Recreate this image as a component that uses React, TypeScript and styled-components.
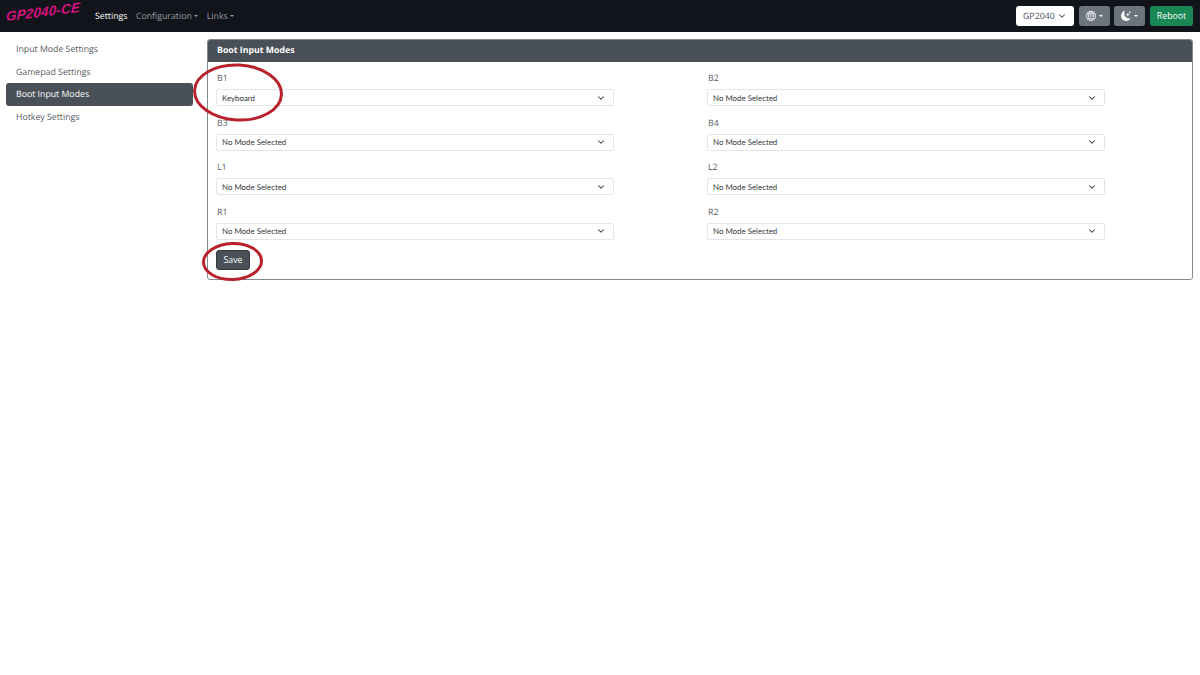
import { ChevronDown } from "lucide-react";
import { BsGlobe, BsMoonStarsFill } from "react-icons/bs";
import styled, { createGlobalStyle } from "styled-components";

const GlobalStyle = createGlobalStyle`
  html, body {
    margin: 0;
    background: #fff;
  }
  body {
    font-family: "Open Sans", "Noto Sans", sans-serif;
    font-size: 8.75px;
    color: #212529;
    text-rendering: geometricPrecision;
  }
`;

const Page = styled.div`
  position: relative;
  width: 1200px;
  height: 675px;
  overflow: hidden;
`;

const Navbar = styled.nav`
  height: 32px;
  background: #12141c;
  display: flex;
  align-items: center;
  padding: 0 7px 0 6px;
`;

const Logo = styled.span`
  width: 89px;
  flex: none;
  font-family: "Liberation Sans", sans-serif;
  font-size: 13.5px;
  font-style: italic;
  font-weight: 700;
  letter-spacing: 0.2px;
  color: #d6127f;
  transform: rotate(-7deg) skewX(-10deg);
  transform-origin: left center;
  white-space: nowrap;
`;

const NavLink = styled.a<{ $active?: boolean }>`
  color: ${(p) => (p.$active ? "#fff" : "#9a9da1")};
  margin-right: 8.5px;
  white-space: nowrap;
  &.dropdown::after {
    content: "";
    display: inline-block;
    margin-left: 2.5px;
    vertical-align: 2px;
    border-top: 2.5px solid;
    border-left: 2.5px solid transparent;
    border-right: 2.5px solid transparent;
  }
`;

const NavRight = styled.div`
  margin-left: auto;
  display: flex;
  align-items: center;
  gap: 4px;
`;

const BoardSelect = styled.div`
  width: 58px;
  height: 20px;
  box-sizing: border-box;
  margin-right: 1px;
  background: #fff;
  border-radius: 3px;
  padding: 0 7px;
  display: flex;
  align-items: center;
  justify-content: space-between;
  color: #495057;
`;

const NavButton = styled.button<{ $green?: boolean }>`
  height: 20px;
  width: ${(p) => (p.$green ? "43px" : "31px")};
  margin-left: ${(p) => (p.$green ? "1px" : "0")};
  padding: 0;
  border: 0;
  border-radius: 3px;
  background: ${(p) => (p.$green ? "#198754" : "#6c757d")};
  color: #fff;
  font: inherit;
  display: flex;
  align-items: center;
  justify-content: center;
  gap: 3px;
  &.dropdown::after {
    content: "";
    border-top: 2.5px solid;
    border-left: 2.5px solid transparent;
    border-right: 2.5px solid transparent;
  }
`;

const Main = styled.div`
  display: flex;
  padding: 7px 7px 0 6px;
  gap: 14px;
`;

const Sidebar = styled.aside`
  width: 187px;
  flex: none;
  display: flex;
  flex-direction: column;
  margin-top: -1px;
`;

const SideItem = styled.a<{ $active?: boolean }>`
  height: 22.6px;
  line-height: 22.6px;
  padding: 0 10px;
  border-radius: 3px;
  color: ${(p) => (p.$active ? "#fff" : "#555b61")};
  background: ${(p) => (p.$active ? "#495057" : "transparent")};
`;

const Card = styled.section`
  flex: 1;
  height: 241px;
  box-sizing: border-box;
  border: 1px solid #85888c;
  border-radius: 3px;
  overflow: hidden;
`;

const CardHeader = styled.h2`
  margin: -1px -1px 0;
  height: 23px;
  line-height: 23px;
  padding: 0 10px;
  background: #495057;
  color: #fff;
  font-size: 8.75px;
  font-weight: 700;
`;

const CardBody = styled.div`
  padding: 9px 8px 0;
`;

const FieldGrid = styled.div`
  display: grid;
  grid-template-columns: 491px 1fr;
  row-gap: 9.5px;
`;

const Field = styled.label`
  display: block;
`;

const FieldLabel = styled.div`
  height: 18px;
  line-height: 15px;
  padding-left: 1px;
  color: #555b61;
`;

const SelectBox = styled.div`
  width: 398px;
  height: 17px;
  box-sizing: border-box;
  border: 1px solid #e3e5e8;
  border-radius: 2px;
  padding: 0 7px 0 5px;
  display: flex;
  align-items: center;
  justify-content: space-between;
  font-family: "Lato", "Open Sans", sans-serif;
  font-size: 7.9px;
  color: #343a40;
`;

const SaveButton = styled.button`
  display: block;
  margin-top: 10.5px;
  width: 34px;
  height: 20px;
  padding: 0;
  border: 1px solid #343a40;
  border-radius: 3px;
  background: #495057;
  color: #fff;
  font: inherit;
`;

const Ring = styled.svg<{ $left: number; $top: number }>`
  position: absolute;
  left: ${(p) => p.$left}px;
  top: ${(p) => p.$top}px;
  overflow: visible;
  pointer-events: none;
`;

const modes = [
  { label: "B1", value: "Keyboard" },
  { label: "B2", value: "No Mode Selected" },
  { label: "B3", value: "No Mode Selected" },
  { label: "B4", value: "No Mode Selected" },
  { label: "L1", value: "No Mode Selected" },
  { label: "L2", value: "No Mode Selected" },
  { label: "R1", value: "No Mode Selected" },
  { label: "R2", value: "No Mode Selected" },
];

export default function App() {
  return (
    <Page>
      <GlobalStyle />
      <Navbar>
        <Logo>GP2040-CE</Logo>
        <NavLink $active>Settings</NavLink>
        <NavLink className="dropdown">Configuration</NavLink>
        <NavLink className="dropdown">Links</NavLink>
        <NavRight>
          <BoardSelect>
            GP2040 <ChevronDown size={10} strokeWidth={2.5} />
          </BoardSelect>
          <NavButton className="dropdown">
            <BsGlobe size={10} />
          </NavButton>
          <NavButton className="dropdown">
            <BsMoonStarsFill size={10} />
          </NavButton>
          <NavButton $green>Reboot</NavButton>
        </NavRight>
      </Navbar>
      <Main>
        <Sidebar>
          <SideItem>Input Mode Settings</SideItem>
          <SideItem>Gamepad Settings</SideItem>
          <SideItem $active>Boot Input Modes</SideItem>
          <SideItem>Hotkey Settings</SideItem>
        </Sidebar>
        <Card>
          <CardHeader>Boot Input Modes</CardHeader>
          <CardBody>
            <FieldGrid>
              {modes.map((m) => (
                <Field key={m.label}>
                  <FieldLabel>{m.label}</FieldLabel>
                  <SelectBox>
                    {m.value}
                    <ChevronDown size={10} strokeWidth={2.5} color="#343a40" />
                  </SelectBox>
                </Field>
              ))}
            </FieldGrid>
            <SaveButton>Save</SaveButton>
          </CardBody>
        </Card>
      </Main>
      <Ring $left={193} $top={63} width="90" height="59" viewBox="0 0 90 59">
        <ellipse
          cx="45"
          cy="29.5"
          rx="43.5"
          ry="27.5"
          transform="rotate(3 45 29.5)"
          fill="none"
          stroke="#b8222c"
          strokeWidth="3"
        />
      </Ring>
      <Ring $left={202} $top={242} width="61" height="39" viewBox="0 0 61 39">
        <ellipse
          cx="30.5"
          cy="19.5"
          rx="29"
          ry="18"
          transform="rotate(-2 30.5 19.5)"
          fill="none"
          stroke="#b8222c"
          strokeWidth="3"
        />
      </Ring>
    </Page>
  );
}
